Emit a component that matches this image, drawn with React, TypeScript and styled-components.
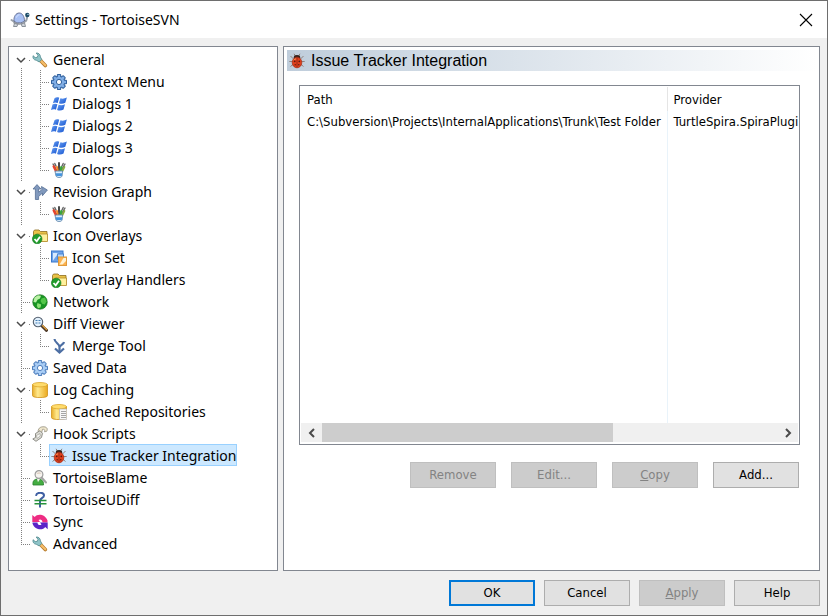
import React, { useState } from "react";
import styled, { createGlobalStyle, css } from "styled-components";

const uiFont = `"Noto Sans", "Open Sans", sans-serif`;
const formFont = `"DejaVu Sans Condensed", "Noto Sans", sans-serif`;

const GlobalStyle = createGlobalStyle`
  * { box-sizing: border-box; }
  body { margin: 0; background: #f0f0f0; color: #000; font-family: ${uiFont}; }
  button { font: inherit; color: inherit; padding: 0; margin: 0; border: 0; background: none; }
  ul { list-style: none; margin: 0; padding: 0; }
`;

const Window = styled.div`
  display: flex;
  flex-direction: column;
  min-height: 100vh;
  border: 1px solid #6e6e6e;
  background: #f0f0f0;
`;

const TitleBar = styled.header`
  display: flex;
  align-items: center;
  height: 37px;
  padding: 0 14px 0 9px;
  background: #fff;
`;

const Title = styled.h1`
  flex: 1;
  margin: 0 0 0 5px;
  font-size: 14px;
  font-weight: 400;
  line-height: 20px;
`;

const CloseButton = styled.button`
  display: flex;
  width: 14px;
  height: 14px;
`;

const Main = styled.main`
  flex: 1;
  display: grid;
  grid-template-columns: 270px minmax(0, 1fr);
  gap: 5px;
  padding: 8px 7px 0;
`;

const Panel = styled.div`
  border: 1px solid #828790;
  background: #fff;
`;

const TreePanel = styled(Panel)`
  padding: 1px 2px;
`;

const PagePanel = styled(Panel)`
  display: flex;
  flex-direction: column;
  padding: 3px 2px 3px 3px;
`;

const TreeRow = styled.div`
  display: flex;
  height: 22px;
`;

type Line = "none" | "full" | "top" | "bottom";
const lineSize = { none: "0", full: "22px", top: "12px", bottom: "11px" };

const Guide = styled.span<{ $line: Line; $branch: boolean }>`
  display: flex;
  align-items: center;
  justify-content: center;
  width: 19px;
  height: 22px;
  background-repeat: no-repeat;
  background-image: repeating-linear-gradient(to bottom, #808080 0 1px, transparent 1px 2px),
    repeating-linear-gradient(to right, #808080 0 1px, transparent 1px 2px);
  background-size: 1px ${(p) => lineSize[p.$line]}, ${(p) => (p.$branch ? "10px 1px" : "0 0")};
  background-position: 10px ${(p) => (p.$line === "bottom" ? "12px" : "0")}, 10px 12px;
`;

const Expander = styled.button`
  display: flex;
  align-items: center;
  justify-content: center;
  width: 15px;
  height: 18px;
  padding-top: 2px;
  background: #fff;
`;

const TreeLabel = styled.button<{ $selected: boolean }>`
  display: flex;
  align-items: center;
  gap: 5px;
  height: 22px;
  padding: 1px 0 0 1px;
  border: 1px solid transparent;
  font-size: 14px;
  line-height: 18px;
  white-space: nowrap;
  ${(p) => p.$selected && css`
    border-color: #99d1ff;
    background: #cce8ff;
  `}
`;

const PageHeader = styled.div`
  display: flex;
  align-items: center;
  gap: 6px;
  height: 21px;
  padding-left: 2px;
  background: linear-gradient(to right, #bfcddb, #fff);
`;

const PageTitle = styled.h2`
  margin: 0;
  font: 400 16px/20px "Liberation Sans", Arial, sans-serif;
`;

const ListView = styled.section`
  display: flex;
  flex-direction: column;
  height: 360px;
  margin: 14px 17px 0 12px;
  padding: 1px 1px 2px;
  border: 1px solid #828790;
  font: 13px/16px ${formFont};
`;

const Viewport = styled.div`
  flex: 1;
  overflow: hidden;
`;

const Table = styled.table`
  width: 560px;
  height: 100%;
  table-layout: fixed;
  border-collapse: collapse;
`;

const HeadCell = styled.th`
  height: 24px;
  padding: 2px 6px 0;
  border-right: 1px solid #e5e5e5;
  font-weight: 400;
  text-align: left;
  &:first-child { width: 366px; }
`;

const Cell = styled.td<{ $fill?: boolean }>`
  height: ${(p) => (p.$fill ? "auto" : "20px")};
  padding: 2px 0 0 6px;
  border-right: 1px solid #e9f3fa;
  white-space: nowrap;
`;

const ScrollBar = styled.div`
  display: flex;
  height: 19px;
  background: #f0f0f0;
`;

const ScrollButton = styled.button`
  display: flex;
  align-items: center;
  justify-content: center;
  width: 21px;
`;

const ScrollTrack = styled.div`
  flex: 1;
`;

const ScrollThumb = styled.div`
  width: 64%;
  height: 100%;
  background: #cdcdcd;
`;

const ButtonBar = styled.div`
  display: flex;
  justify-content: flex-end;
  gap: 15px;
  margin: 17px 18px 0 0;
`;

const Footer = styled.footer`
  display: flex;
  justify-content: flex-end;
  gap: 9px;
  padding: 9px 7px;
`;

const PushButton = styled.button<{ $primary?: boolean }>`
  width: 86px;
  height: 26px;
  border: ${(p) => (p.$primary ? "2px solid #0078d7" : "1px solid #adadad")};
  background: #e1e1e1;
  font: 13px/16px ${formFont};
  &:disabled {
    border-color: #bfbfbf;
    background: #ccc;
    color: #838383;
  }
`;

const Svg = styled.svg`
  display: block;
  flex: none;
`;

const gearTeeth = [0, 45, 90, 135];

const Gear = ({ light }: { light?: boolean }) => (
  <g>
    <g fill={light ? "#4f7fbd" : "#2f5f9c"}>
      {gearTeeth.map((a) => (
        <rect key={a} x="5.8" y="0" width="4.4" height="16" rx="1" transform={`rotate(${a} 8 8)`} />
      ))}
      <circle cx="8" cy="8" r="6.2" />
    </g>
    <g fill={light ? "#a9cdf5" : "#80aee6"}>
      {gearTeeth.map((a) => (
        <rect key={a} x="6.8" y="1" width="2.4" height="14" rx=".5" transform={`rotate(${a} 8 8)`} />
      ))}
      <circle cx="8" cy="8" r="5.2" />
    </g>
    <circle cx="8" cy="8" r="2.6" fill="#fff" stroke={light ? "#4f7fbd" : "#2f5f9c"} strokeWidth="1" />
  </g>
);

const Folder = () => (
  <g>
    <path d="M1.5 13V3.500l1-1.500H7l1.500 1.500h6.500v9.500z" fill="#e9c248" stroke="#8c6b1d" strokeWidth=".8" />
    <path d="M3 13.500 4.500 6H15.500v7.500z" fill="#fff09c" stroke="#b48a27" strokeWidth=".8" />
    <circle cx="5.200" cy="11" r="4.800" fill="#219b2c" stroke="#147a20" strokeWidth=".6" />
    <path d="m2.500 11 2.200 2.300 3.300-4.600" fill="none" stroke="#fff" strokeWidth="1.800" />
  </g>
);

const Cylinder = () => (
  <g>
    <path d="M.5 2.500v11.200c0 2.500 15 2.500 15 0V2.500z" fill="url(#gold)" stroke="#cf921c" strokeWidth=".8" />
    <ellipse cx="8" cy="2.700" rx="7.500" ry="2.200" fill="#ffdc6c" stroke="#dca62b" strokeWidth=".8" />
  </g>
);

const drawings: Record<string, React.ReactNode> = {
  wrench: (
    <g>
      <path d="m8.500 8.500 4.800 5" stroke="#b57a2c" strokeWidth="3.600" strokeLinecap="round" />
      <path d="m8 8 5.300 5.300" stroke="#f6bd69" strokeWidth="2.200" strokeLinecap="round" />
      <path d="M4.200 1 6 3.300 5.300 5.300 3.200 5.600 1.100 3.700C.5 6 1.700 8 4.300 8.300l3 1.700L9.800 7.400 8.400 5C8.400 2.600 6.700.7 4.200 1z" fill="#8fc4c8" stroke="#4d868c" strokeWidth=".8" />
    </g>
  ),
  gear: <Gear />,
  gearLight: <Gear light />,
  windows: (
    <g fill="url(#flag)">
      <path d="M3.500 2.200C5 1.100 6.500.9 8.200 1.700L6.700 7C5 6.100 3.500 6.300 1.900 7.200z" />
      <path d="M9.400 2.200c2 .8 4 .5 6.500-.7l-1.600 5.300c-2.300 1.200-4.400 1.300-6.400.5z" />
      <path d="M1.500 8.500c1.800-1 3.300-1 4.900-.2l-1.500 5.500c-1.600-.8-3.200-.6-4.900.3z" />
      <path d="M7.600 8.700c2.100.8 4.100.6 6.400-.5l-1.500 5.400c-2.300 1.200-4.400 1.200-6.400.4z" />
    </g>
  ),
  colors: (
    <g fill="none" strokeLinecap="round">
      <path d="M8 8V1" stroke="#4a4a4a" strokeWidth="2" />
      <path d="M5.500 8 2 2M10.500 8 14 2M5 4 3.800 1.500M11 4l1.200-2.500" stroke="#666" strokeWidth="1.400" />
      <path d="m5 9-2.200-4.500" stroke="#e5442e" strokeWidth="2.600" />
      <path d="m6.700 8-.7-3" stroke="#f48a25" strokeWidth="1.800" />
      <path d="m9.700 8 .6-3" stroke="#35a63f" strokeWidth="2.200" />
      <path d="m11.300 9 2-4" stroke="#8aac42" strokeWidth="2" />
      <path d="M4.400 9h7.200l-.5 5c-.5 2-5.700 2-6.200 0z" fill="#d9ecfc" stroke="#547da5" strokeWidth=".8" />
      <path d="M4.800 11.300h6.400l-.4 2.700H5.200z" fill="#4393dd" />
    </g>
  ),
  revision: (
    <g fill="#8199bd" stroke="#566f94" strokeWidth=".8">
      <path d="M5 .6 1 5h2.400v10.500h3.200v-3L10.500 9v2.700L15.400 6 9.500 2.500l.4 3.200-3.300 2.500V5H9z" />
    </g>
  ),
  overlay: <Folder />,
  iconSet: (
    <g>
      <rect x=".5" y="1" width="11.500" height="11" fill="#6ea3ea" stroke="#3b78cc" />
      <path d="M2 10.500V3h5.500z" fill="#d9eafe" />
      <rect x="6.500" y="4" width="6" height="5" fill="#b4d5fb" stroke="#5088d1" />
      <rect x="7.500" y="7" width="8" height="8.500" fill="#fdb24e" stroke="#e09a3b" />
      <path d="m8.500 14.500 4-6.500h2.500v3l-3.500 3.500z" fill="#fff3d4" />
    </g>
  ),
  globe: (
    <g>
      <circle cx="8" cy="8" r="7.300" fill="#179422" stroke="#207421" strokeWidth=".6" />
      <path d="M2.500 3.500 6 1.300l3 .5-1 2.700-2.500 1.300L4 8.500 1.400 8z" fill="#b9f0a4" />
      <path d="M9.500 4.500 13 3.500l1.500 4-1.800 3-2.600-.8L8.500 7z" fill="#54c64a" />
      <path d="m5.500 9 3.700 1.500-.7 3-2.500.7-1.200-2.500z" fill="#8be174" />
    </g>
  ),
  magnifier: (
    <g>
      <path d="m9.500 9.500 5 4.800" stroke="#4a3727" strokeWidth="3" strokeLinecap="round" />
      <path d="m10.500 9.500 4 4" stroke="#e0a03c" strokeWidth="1.300" strokeLinecap="round" />
      <circle cx="6" cy="6" r="4.700" fill="#e2f0fc" stroke="#53606f" strokeWidth="1.100" />
      <path d="M3.500 4.500h5M3.500 7h5" stroke="#437fb5" strokeDasharray="2 1" />
    </g>
  ),
  merge: (
    <g fill="none" stroke="#4c6ea3">
      <path d="M3.500 1c.3 4 5 4.500 5 8v5M13 4c-.5 2.500-3.500 2.500-4.300 5" strokeWidth="2.200" />
      <path d="m4 10.500 4.500 4 4.500-4" strokeWidth="2.200" />
    </g>
  ),
  cylinder: <Cylinder />,
  cached: (
    <g>
      <Cylinder />
      <path d="M8.500 5h7.200v10.500H8.500z" fill="#f7f7f7" stroke="#b5b5b5" strokeWidth=".7" />
      <path d="M10 7.500h5M10 9.500h5M10 11.500h5M10 13.500h5" stroke="#a5a5a5" />
    </g>
  ),
  hook: (
    <g strokeLinejoin="round">
      <path d="M6 5.500C6.500 1.500 9 .6 12 .8c3 .2 4 2.200 2.700 4.500l-2.200.5c.8-2-.3-2.700-2-2.500L9.500 7z" fill="#f0e7cd" stroke="#96917f" strokeWidth=".8" />
      <path d="M3.500 7.500 8 4.700l2.500 2.600-1 4.200L4 15.300.8 13l2.700-1.500z" fill="#deddd6" stroke="#85857e" strokeWidth=".9" />
      <path d="m4.500 9.500 3.500-2 .3 2.500L5 12.500z" fill="#f6f6f2" stroke="#96968f" strokeWidth=".6" />
    </g>
  ),
  bug: (
    <g>
      <path d="M4.500 6 1.500 3M4 8.500H.3M4.500 11 1.500 13.500M11.500 6l3-3M12 8.500h3.700M11.500 11l3 2.500M6.500 3 5 .8M9.500 3 11 .8" fill="none" stroke="#8a7a74" strokeWidth=".9" />
      <ellipse cx="8" cy="4.300" rx="3.200" ry="2.300" fill="#37231e" />
      <ellipse cx="8" cy="9.500" rx="4.800" ry="5.300" fill="#e0401d" stroke="#a52b14" strokeWidth=".7" />
      <path d="M8 5v9.500" stroke="#8f2413" strokeWidth=".8" />
      <g fill="#5a1a10"><circle cx="5.700" cy="8.300" r=".9" /><circle cx="10.300" cy="8.300" r=".9" /><circle cx="6.200" cy="11.800" r=".7" /><circle cx="9.800" cy="11.800" r=".7" /></g>
      <path d="M4.700 7.200c.8-1 1.500-1.200 2.500-1.200" stroke="#ff9e54" fill="none" />
    </g>
  ),
  blame: (
    <g>
      <path d="M1 15C.3 10.300 3 9 6 9s6 1.500 5.500 6z" fill="#44ad42" stroke="#277d2b" strokeWidth=".8" />
      <path d="m5 9 1 3.300L8 9z" fill="#f0f5ea" />
      <path d="m10 8 4 4.500" stroke="#a3a3a3" strokeWidth="2" strokeLinecap="round" />
      <circle cx="7" cy="4.500" r="3.900" fill="#f6f3ef" stroke="#9c9c9c" strokeWidth="1.200" />
      <path d="M4.500 3.800C5.300 2 8.500 2 9.500 3.600z" fill="#d6c5b3" />
    </g>
  ),
  udiff: (
    <g fill="none">
      <path d="M4 3.800C4.500-.3 12 0 12 3.500 12 6 8 5.800 8 9v6.500" stroke="#3f5fa3" strokeWidth="2" />
      <path d="M2.500 8.500h12M2.500 11.700h12" stroke="#25923b" strokeWidth="1.600" />
    </g>
  ),
  sync: (
    <g>
      <path d="M.3 1 2.800 3C5-.5 13-.5 15.500 6.500v2h-5C10.500 5.500 8 4.700 6.500 6L8 8H.3z" fill="#ee2c83" />
      <path d="M15.700 15.200 13.200 13C11 16.500 3 16.500.5 9.500v-1h5c0 2.500 2.500 3.300 4 2L8 8.500h7.700z" fill="#5b24c8" />
    </g>
  ),
};

const Icon = ({ name }: { name: string }) => (
  <Svg width="16" height="16" viewBox="0 0 16 16" fill="none" aria-hidden="true">{drawings[name]}</Svg>
);

const Gradients = () => (
  <Svg width="0" height="0" aria-hidden="true">
    <defs>
      <linearGradient id="gold">
        <stop offset="0" stopColor="#e8ae2a" />
        <stop offset=".35" stopColor="#ffe98e" />
        <stop offset="1" stopColor="#eba91e" />
      </linearGradient>
      <linearGradient id="flag" x2="1" y2="1">
        <stop offset="0" stopColor="#689ff2" />
        <stop offset="1" stopColor="#1654d0" />
      </linearGradient>
    </defs>
  </Svg>
);

const Turtle = () => (
  <Svg width="20" height="16" viewBox="0 0 20 16" fill="none" aria-hidden="true">
    <path d="M5 10 3.500 14.500h3.500l1-3M11 11l1 3.500h3.500L14 9" fill="#d2d6dc" stroke="#7f8790" strokeWidth=".9" />
    <path d="M1.500 8 4.500 10M14 9.500c2.500 0 3-2 3-4.500" stroke="#9aa1aa" strokeWidth="2" strokeLinecap="round" />
    <path d="M4 9C3.500 4.500 6 1 9.200 1S14.500 4.500 14.500 9c-3 2.500-8 2.500-10.500 0z" fill="#a8c0f4" stroke="#626c8f" strokeWidth=".9" />
    <path d="M6.500 5.500C7 4 8 2.800 9.500 2.800" stroke="#dce8ff" />
    <path d="M3.500 10.500c4 2 8 2 11.500 0" stroke="#8d939c" strokeWidth="1.400" />
    <circle cx="17.300" cy="3" r="2.200" fill="#1f4d68" />
    <circle cx="18" cy="2.400" r=".7" fill="#bfe0ee" />
  </Svg>
);

const Close = () => (
  <Svg width="14" height="14" viewBox="0 0 14 14"><path d="m1 1 12 12M13 1 1 13" stroke="#000" strokeWidth="1.100" /></Svg>
);

const Chevron = ({ d, width = 2 }: { d: string; width?: number }) => (
  <Svg width="10" height="10" viewBox="0 0 10 10"><path d={d} fill="none" stroke="#4a4a4a" strokeWidth={width} /></Svg>
);

type Node = { label: string; icon: string; children?: Node[] };

const tree: Node[] = [
  { label: "General", icon: "wrench", children: [
    { label: "Context Menu", icon: "gear" },
    { label: "Dialogs 1", icon: "windows" },
    { label: "Dialogs 2", icon: "windows" },
    { label: "Dialogs 3", icon: "windows" },
    { label: "Colors", icon: "colors" },
  ] },
  { label: "Revision Graph", icon: "revision", children: [{ label: "Colors", icon: "colors" }] },
  { label: "Icon Overlays", icon: "overlay", children: [
    { label: "Icon Set", icon: "iconSet" },
    { label: "Overlay Handlers", icon: "overlay" },
  ] },
  { label: "Network", icon: "globe" },
  { label: "Diff Viewer", icon: "magnifier", children: [{ label: "Merge Tool", icon: "merge" }] },
  { label: "Saved Data", icon: "gearLight" },
  { label: "Log Caching", icon: "cylinder", children: [{ label: "Cached Repositories", icon: "cached" }] },
  { label: "Hook Scripts", icon: "hook", children: [{ label: "Issue Tracker Integration", icon: "bug" }] },
  { label: "TortoiseBlame", icon: "blame" },
  { label: "TortoiseUDiff", icon: "udiff" },
  { label: "Sync", icon: "sync" },
  { label: "Advanced", icon: "wrench" },
];

const Branch = ({ node, first, last }: { node: Node; first: boolean; last: boolean }) => {
  const [open, setOpen] = useState(true);
  const children = node.children ?? [];
  return (
    <li role="treeitem" aria-expanded={children.length ? open : undefined}>
      <TreeRow>
        <Guide $line={first ? "bottom" : last ? "top" : "full"} $branch>
          {children.length > 0 && (
            <Expander aria-label={`Toggle ${node.label}`} onClick={() => setOpen(!open)}>
              <Chevron d={open ? "m1 3 4 4 4-4" : "m3 1 4 4-4 4"} width={1.5} />
            </Expander>
          )}
        </Guide>
        <TreeLabel $selected={false}><Icon name={node.icon} />{node.label}</TreeLabel>
      </TreeRow>
      {open && children.length > 0 && (
        <ul role="group">
          {children.map((child, i) => (
            <li role="treeitem" key={child.label}>
              <TreeRow>
                <Guide $line="full" $branch={false} />
                <Guide $line={i === children.length - 1 ? "top" : "full"} $branch />
                <TreeLabel $selected={child.icon === "bug"}><Icon name={child.icon} />{child.label}</TreeLabel>
              </TreeRow>
            </li>
          ))}
        </ul>
      )}
    </li>
  );
};

export default function App() {
  return (
    <Window>
      <GlobalStyle />
      <TitleBar>
        <Turtle />
        <Title>Settings - TortoiseSVN</Title>
        <CloseButton aria-label="Close"><Close /></CloseButton>
      </TitleBar>
      <Main>
        <TreePanel as="nav" aria-label="Settings pages">
          <ul role="tree">
            {tree.map((node, i) => (
              <Branch key={node.label} node={node} first={i === 0} last={i === tree.length - 1} />
            ))}
          </ul>
        </TreePanel>
        <PagePanel>
          <PageHeader><Icon name="bug" /><PageTitle>Issue Tracker Integration</PageTitle></PageHeader>
          <ListView>
            <Viewport>
              <Table>
                <thead><tr><HeadCell>Path</HeadCell><HeadCell>Provider</HeadCell></tr></thead>
                <tbody>
                  <tr>
                    <Cell>C:\Subversion\Projects\InternalApplications\Trunk\Test Folder</Cell>
                    <Cell>TurtleSpira.SpiraPlugin</Cell>
                  </tr>
                  <tr aria-hidden="true"><Cell $fill /><Cell $fill /></tr>
                </tbody>
              </Table>
            </Viewport>
            <ScrollBar>
              <ScrollButton aria-label="Scroll left"><Chevron d="M7 1 3 5l4 4" /></ScrollButton>
              <ScrollTrack><ScrollThumb /></ScrollTrack>
              <ScrollButton aria-label="Scroll right"><Chevron d="m3 1 4 4-4 4" /></ScrollButton>
            </ScrollBar>
          </ListView>
          <ButtonBar>
            <PushButton disabled>Remove</PushButton>
            <PushButton disabled>Edit...</PushButton>
            <PushButton disabled><u>C</u>opy</PushButton>
            <PushButton>Add...</PushButton>
          </ButtonBar>
        </PagePanel>
      </Main>
      <Footer>
        <PushButton $primary>OK</PushButton>
        <PushButton>Cancel</PushButton>
        <PushButton disabled><u>A</u>pply</PushButton>
        <PushButton>Help</PushButton>
      </Footer>
      <Gradients />
    </Window>
  );
}
